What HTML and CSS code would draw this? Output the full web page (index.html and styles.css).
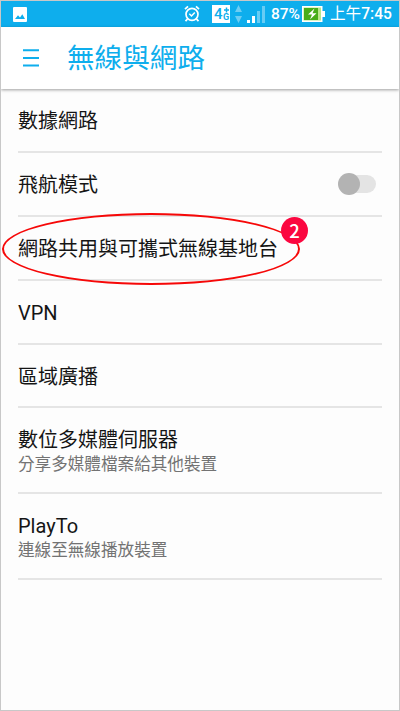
FILE: index.html
```
<!DOCTYPE html>
<html lang="zh-Hant">
<head>
<meta charset="utf-8">
<title>無線與網路</title>
<link rel="stylesheet" href="styles.css">
</head>
<body>
<div class="phone">
  <div class="status">
    <svg class="picture" width="14" height="15" viewBox="0 0 14 15"><rect width="14" height="15" rx="1" fill="#fff"/><path d="M2 12 5 8.3 7 10.5 9.3 7.3 12 12z" fill="#0eaeed"/></svg>
    <svg class="alarm" width="16" height="18" viewBox="0 0 16 18" fill="none" stroke="#fff"><circle cx="8" cy="9.3" r="6" stroke-width="1.7"/><path d="M1 4.2 4 1.4M15 4.2 12 1.4M3.5 14 1.5 16.2M12.5 14l2 2.2" stroke-width="1.8"/><path d="M5.3 8.8 7.5 11l3.3-3.6" stroke-width="1.5"/></svg>
    <div class="net"><span class="gen">4</span><span class="sub"><svg width="5" height="6" viewBox="0 0 5 6"><path d="M0 3h5M2.5 .5v5" stroke="#0eaeed" stroke-width="1.5"/></svg><span>G</span></span></div>
    <svg class="arrows" width="7" height="18" viewBox="0 0 7 18" fill="#6dcdf3"><path d="M0 7 3.5 0 7 7zM0 11h7L3.5 18z"/></svg>
    <svg class="signal" width="18" height="17" viewBox="0 0 18 17"><path d="M0 14h3v3H0zM5 10h3v7H5z" fill="#fff"/><path d="M10 5h3v12h-3zM15 0h3v17h-3z" fill="#67ccf4"/></svg>
    <span class="percent">87%</span>
    <svg class="battery" width="23" height="16" viewBox="0 0 23 16"><path d="M20 5h3v6h-3z" fill="#fff"/><rect x=".75" y=".75" width="19" height="14.5" fill="#b9e58a" stroke="#fff" stroke-width="1.5"/><path d="M2 2h14v12H2z" fill="#48ad18"/><path d="M12.5 2.5 6 8.5h4l-2 5 6.5-6.2h-4z" fill="#fff"/></svg>
    <span class="time"><span class="ampm">上午</span>7:45</span>
  </div>
  <header class="header">
    <svg class="menu" width="16" height="18" viewBox="0 0 16 18"><path d="M0 1.2h16M0 9h16M0 16.5h16" stroke="#0eaeed" stroke-width="2"/></svg>
    <h1 class="title">無線與網路</h1>
  </header>
  <main class="list">
    <div class="row"><div class="label">數據網路</div></div>
    <div class="row"><div class="label">飛航模式</div><div class="switch"><div class="knob"></div></div></div>
    <div class="row marked"><div class="label">網路共用與可攜式無線基地台</div>
      <div class="ring"></div><div class="badge">2</div>
    </div>
    <div class="row"><div class="label latin">VPN</div></div>
    <div class="row short"><div class="label">區域廣播</div></div>
    <div class="row double"><div class="label">數位多媒體伺服器</div><div class="summary">分享多媒體檔案給其他裝置</div></div>
    <div class="row double"><div class="label">PlayTo</div><div class="summary">連線至無線播放裝置</div></div>
  </main>
</div>
</body>
</html>
```
FILE: styles.css
```
* { box-sizing: border-box; }
body {
  margin: 0;
  font-family: Roboto, "Noto Sans CJK TC", sans-serif;
  color: #151515;
}
.phone {
  width: 400px;
  height: 711px;
  border: 1px solid #c8c8c8;
  background: #fdfdfd;
  overflow: hidden;
}
svg { display: block; flex: none; }
.status {
  height: 26px;
  background: #0eaeed;
  color: #fff;
  display: flex;
  align-items: center;
  padding-left: 12px;
  white-space: nowrap;
}
.alarm { margin-left: 157px; }
.net {
  width: 18px;
  height: 18px;
  margin-left: 12px;
  background: #fff;
  color: #0eaeed;
  display: flex;
  align-items: center;
  padding-left: 2px;
  font-weight: 500;
}
.gen { font-size: 15px; line-height: 18px; width: 9px; }
.sub {
  display: flex;
  flex-direction: column;
  align-items: center;
  width: 6px;
  font-size: 9px;
  line-height: 9px;
  font-weight: 700;
}
.arrows { margin-left: 5px; }
.signal { margin-left: 5px; }
.percent {
  width: 30px;
  margin-left: 6px;
  font-size: 15.5px;
  line-height: 24px;
  letter-spacing: -.1px;
  font-weight: 500;
}
.battery { margin-left: 1px; }
.time {
  margin-left: 5px;
  font-size: 15.6px;
  line-height: 24px;
  font-weight: 500;
}
.ampm { font-weight: 400; }
.header {
  height: 62px;
  background: #fff;
  display: flex;
  align-items: center;
  padding-left: 22px;
  position: relative;
  box-shadow: 0 1px 3px rgba(0, 0, 0, .38);
}
.title {
  margin: 0 0 0 28px;
  padding-top: 2px;
  font-size: 27.6px;
  line-height: 40px;
  font-weight: 400;
  color: #0eaeed;
}
.list { padding: 0 17px; }
.row {
  height: 64px;
  border-bottom: 2px solid #e5e5e5;
  display: flex;
  align-items: center;
  justify-content: space-between;
}
.short { height: 63px; }
.label { padding-top: 2px; font-size: 20px; line-height: 26px; white-space: nowrap; }
.latin { padding-top: 1px; }
.double {
  height: 86px;
  flex-direction: column;
  align-items: flex-start;
  justify-content: flex-start;
  padding-top: 17px;
}
.summary { font-size: 16.6px; line-height: 24px; color: #737373; }
.switch {
  width: 36px;
  height: 18px;
  margin-right: 6px;
  border-radius: 9px;
  background: #e4e4e4;
  display: flex;
  align-items: center;
}
.knob {
  width: 22px;
  height: 22px;
  flex: none;
  margin-left: -2px;
  border-radius: 50%;
  background: #b3b3b3;
}
.marked { position: relative; }
.ring {
  position: absolute;
  left: -16px;
  top: -4px;
  width: 298px;
  height: 72px;
  border: 2px solid #f60808;
  border-radius: 50%;
}
.badge {
  position: absolute;
  left: 263px;
  top: 0;
  width: 27px;
  height: 27px;
  border-radius: 50%;
  background: #fb0740;
  color: #fff;
  font: 500 18.5px/26px "Noto Sans CJK TC", sans-serif;
  text-align: center;
}
```
